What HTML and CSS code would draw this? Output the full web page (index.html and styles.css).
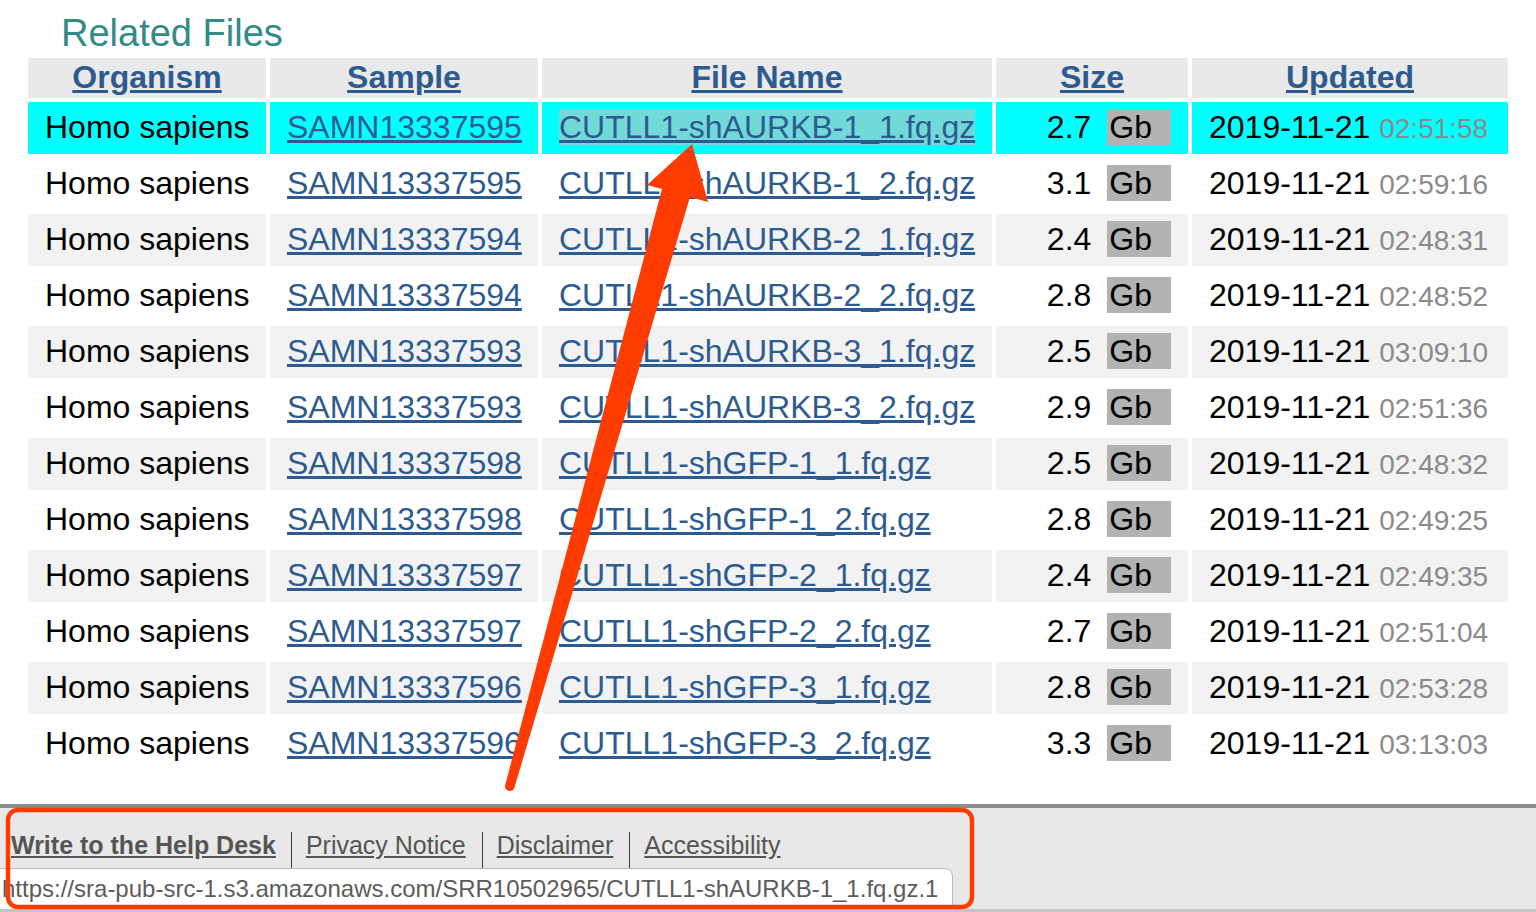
FILE: index.html
```html
<!DOCTYPE html>
<html lang="en">
<head>
<meta charset="utf-8">
<title>Related Files</title>
<link rel="stylesheet" href="styles.css">
</head>
<body>
<main class="page">
  <h2 class="section-title">Related Files</h2>
  <table class="files">
    <thead>
      <tr>
        <th class="c-org"><a href="#">Organism</a></th>
        <th class="c-sample"><a href="#">Sample</a></th>
        <th class="c-file"><a href="#">File Name</a></th>
        <th class="c-size"><a href="#">Size</a></th>
        <th class="c-upd"><a href="#">Updated</a></th>
      </tr>
    </thead>
    <tbody>
      <tr class="hover">
        <td>Homo sapiens</td><td><a href="#">SAMN13337595</a></td>
        <td><a href="#" class="hl">CUTLL1-shAURKB-1_1.fq.gz</a></td>
        <td class="size"><span>2.7</span><span class="unit">Gb</span></td>
        <td>2019-11-21 <span class="time">02:51:58</span></td>
      </tr>
      <tr>
        <td>Homo sapiens</td><td><a href="#">SAMN13337595</a></td>
        <td><a href="#">CUTLL1-shAURKB-1_2.fq.gz</a></td>
        <td class="size"><span>3.1</span><span class="unit">Gb</span></td>
        <td>2019-11-21 <span class="time">02:59:16</span></td>
      </tr>
      <tr>
        <td>Homo sapiens</td><td><a href="#">SAMN13337594</a></td>
        <td><a href="#">CUTLL1-shAURKB-2_1.fq.gz</a></td>
        <td class="size"><span>2.4</span><span class="unit">Gb</span></td>
        <td>2019-11-21 <span class="time">02:48:31</span></td>
      </tr>
      <tr>
        <td>Homo sapiens</td><td><a href="#">SAMN13337594</a></td>
        <td><a href="#">CUTLL1-shAURKB-2_2.fq.gz</a></td>
        <td class="size"><span>2.8</span><span class="unit">Gb</span></td>
        <td>2019-11-21 <span class="time">02:48:52</span></td>
      </tr>
      <tr>
        <td>Homo sapiens</td><td><a href="#">SAMN13337593</a></td>
        <td><a href="#">CUTLL1-shAURKB-3_1.fq.gz</a></td>
        <td class="size"><span>2.5</span><span class="unit">Gb</span></td>
        <td>2019-11-21 <span class="time">03:09:10</span></td>
      </tr>
      <tr>
        <td>Homo sapiens</td><td><a href="#">SAMN13337593</a></td>
        <td><a href="#">CUTLL1-shAURKB-3_2.fq.gz</a></td>
        <td class="size"><span>2.9</span><span class="unit">Gb</span></td>
        <td>2019-11-21 <span class="time">02:51:36</span></td>
      </tr>
      <tr>
        <td>Homo sapiens</td><td><a href="#">SAMN13337598</a></td>
        <td><a href="#">CUTLL1-shGFP-1_1.fq.gz</a></td>
        <td class="size"><span>2.5</span><span class="unit">Gb</span></td>
        <td>2019-11-21 <span class="time">02:48:32</span></td>
      </tr>
      <tr>
        <td>Homo sapiens</td><td><a href="#">SAMN13337598</a></td>
        <td><a href="#">CUTLL1-shGFP-1_2.fq.gz</a></td>
        <td class="size"><span>2.8</span><span class="unit">Gb</span></td>
        <td>2019-11-21 <span class="time">02:49:25</span></td>
      </tr>
      <tr>
        <td>Homo sapiens</td><td><a href="#">SAMN13337597</a></td>
        <td><a href="#">CUTLL1-shGFP-2_1.fq.gz</a></td>
        <td class="size"><span>2.4</span><span class="unit">Gb</span></td>
        <td>2019-11-21 <span class="time">02:49:35</span></td>
      </tr>
      <tr>
        <td>Homo sapiens</td><td><a href="#">SAMN13337597</a></td>
        <td><a href="#">CUTLL1-shGFP-2_2.fq.gz</a></td>
        <td class="size"><span>2.7</span><span class="unit">Gb</span></td>
        <td>2019-11-21 <span class="time">02:51:04</span></td>
      </tr>
      <tr>
        <td>Homo sapiens</td><td><a href="#">SAMN13337596</a></td>
        <td><a href="#">CUTLL1-shGFP-3_1.fq.gz</a></td>
        <td class="size"><span>2.8</span><span class="unit">Gb</span></td>
        <td>2019-11-21 <span class="time">02:53:28</span></td>
      </tr>
      <tr>
        <td>Homo sapiens</td><td><a href="#">SAMN13337596</a></td>
        <td><a href="#">CUTLL1-shGFP-3_2.fq.gz</a></td>
        <td class="size"><span>3.3</span><span class="unit">Gb</span></td>
        <td>2019-11-21 <span class="time">03:13:03</span></td>
      </tr>
    </tbody>
  </table>
</main>
<footer class="site-footer">
  <ul class="footer-links">
    <li class="strong"><a href="#">Write to the Help Desk</a></li>
    <li><a href="#">Privacy Notice</a></li>
    <li><a href="#">Disclaimer</a></li>
    <li><a href="#">Accessibility</a></li>
  </ul>
  <div class="status-url">https://sra-pub-src-1.s3.amazonaws.com/SRR10502965/CUTLL1-shAURKB-1_1.fq.gz.1</div>
</footer>
<svg class="annotation" width="1536" height="912" viewBox="0 0 1536 912" aria-hidden="true">
  <path d="M505 786 L662 189 L647 185 L692 144 L708 202 L690 197 L514 789 A5 5 0 0 1 505 786 Z" fill="#fe3b00"/>
  <rect x="8" y="810" width="964" height="97" rx="10" ry="10" fill="none" stroke="#fe3b00" stroke-width="4.5"/>
</svg>
</body>
</html>
```
FILE: styles.css
```css
html, body {
  margin: 0;
  padding: 0;
  background: #ffffff;
}

body {
  position: relative;
  width: 1536px;
  height: 912px;
  overflow: hidden;
  font-family: "Liberation Sans", Arial, Helvetica, sans-serif;
  color: #000;
}

.page {
  padding-top: 13px;
}

.section-title {
  margin: 0 0 0 61px;
  font-size: 38px;
  line-height: 41px;
  font-weight: normal;
  color: #338b88;
}

.files {
  margin-left: 24px;
  border-collapse: separate;
  border-spacing: 4px;
  table-layout: fixed;
  width: 1488px;
  font-size: 32px;
}

.files th {
  height: 38px;
  padding: 0 17px 2px;
  background: #e9e9e9;
  text-align: center;
  font-weight: bold;
  vertical-align: middle;
}

.files th a {
  color: #2e5b8f;
}

.c-org { width: 204px; }
.c-sample { width: 234px; }
.c-file { width: 416px; }
.c-size { width: 158px; }
.c-upd { width: 282px; }

.files td {
  height: 51px;
  padding: 0 17px 1px;
  text-align: left;
  vertical-align: middle;
  white-space: nowrap;
}

.files tbody tr:nth-child(odd) td {
  background: #f2f2f2;
}

.files tbody tr.hover td {
  background: #00ffff;
}

.files td a {
  color: #2e5b8f;
}

.files td a.hl {
  background: #72d9d9;
}

.files td.size {
  text-align: right;
}

.unit {
  margin-left: 16px;
  padding: 0 19px 0 2px;
  background: #b3b3b3;
}

.time {
  font-size: 28px;
  color: #8a8a8a;
}

.site-footer {
  position: relative;
  margin-top: 30px;
  height: 101px;
  border-top: 4px solid #8d8d8d;
  border-bottom: 3px solid #c4c4c4;
  background: #e8e8e8;
}

.footer-links {
  display: flex;
  margin: 0;
  padding: 24px 0 0 0;
  list-style: none;
  font-size: 25px;
}

.footer-links li {
  height: 29px;
  line-height: 27px;
  padding: 0 16px 7px 14px;
  border-left: 1px solid #3a3a3a;
}

.footer-links li.strong {
  padding-left: 11px;
  padding-right: 15px;
  border-left: none;
  font-weight: bold;
}

.footer-links a {
  color: #555555;
}

.status-url {
  position: absolute;
  left: -1px;
  bottom: 0;
  width: 954px;
  height: 41px;
  box-sizing: border-box;
  border: 1px solid #bdbdbd;
  border-bottom: none;
  border-top-right-radius: 8px;
  background: #ffffff;
  font-size: 24px;
  line-height: 40px;
  color: #5c5c5c;
  white-space: nowrap;
  overflow: hidden;
  padding-left: 2px;
}

.annotation {
  position: absolute;
  top: 0;
  left: 0;
  pointer-events: none;
}
```
